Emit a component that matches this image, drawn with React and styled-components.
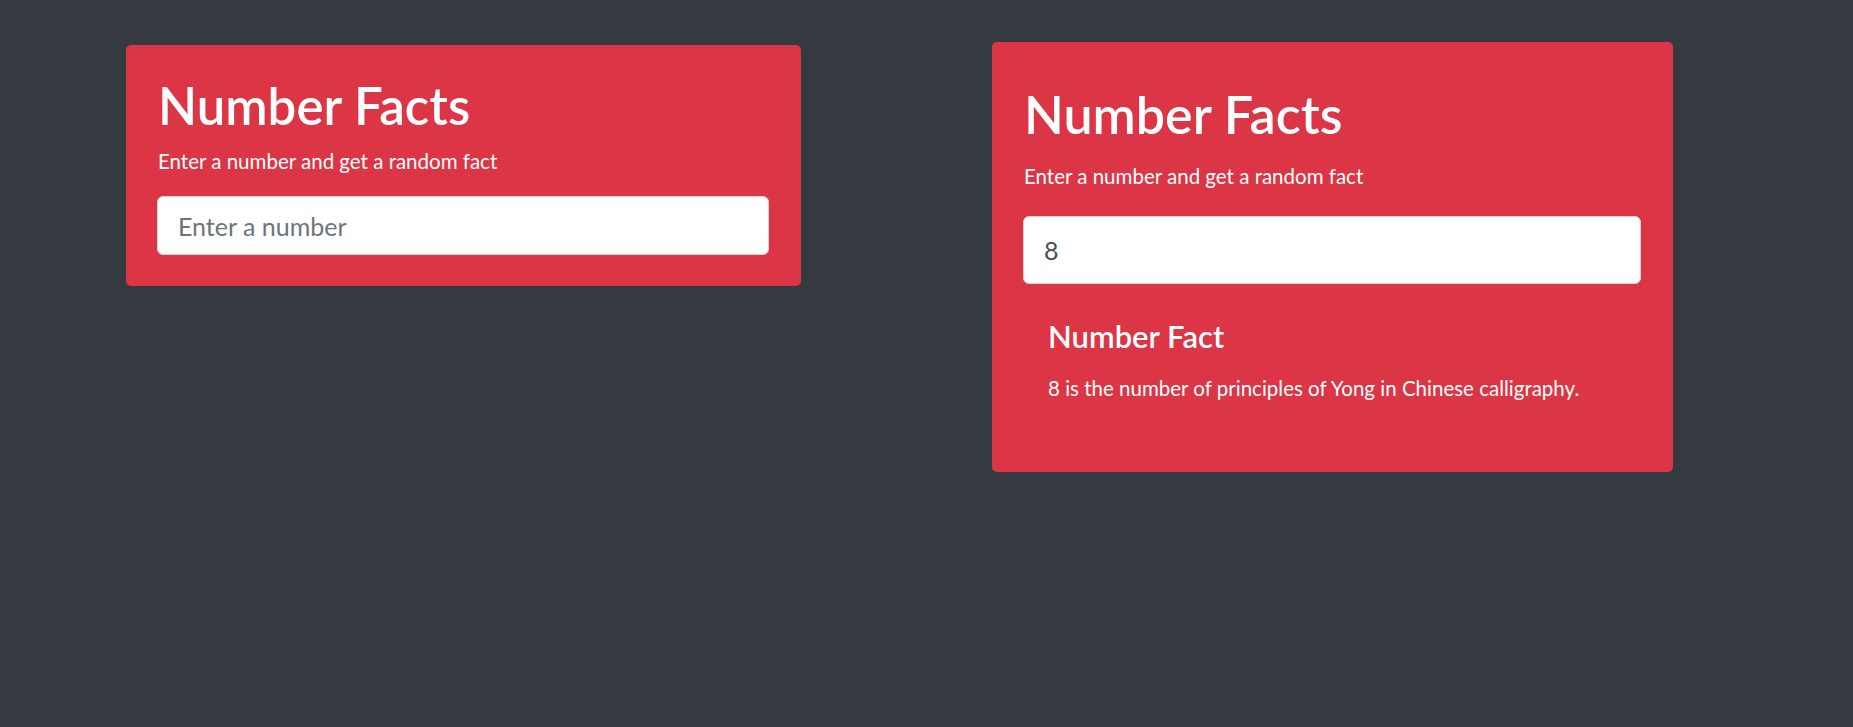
import React from "react";
import styled, { createGlobalStyle } from "styled-components";

const GlobalStyle = createGlobalStyle`
  html, body {
    margin: 0;
    padding: 0;
    background: #343a40;
    height: 100%;
  }
  body {
    font-family: Lato, "Noto Sans", "Liberation Sans", sans-serif;
    color: #fff;
  }
  * { box-sizing: border-box; }
`;

const Page = styled.main`
  display: grid;
  grid-template-columns: 675px 681px;
  column-gap: 191px;
  align-items: start;
  padding: 42px 0 0 126px;
  min-height: 727px;
`;

const Card = styled.section`
  background: #dc3545;
  border-radius: 5px;
  margin-top: ${(p) => (p.$tall ? "0" : "3px")};
  padding: ${(p) => (p.$tall ? "41px 32px 32px 31px" : "31px 32px 31px 31px")};
  display: flex;
  flex-direction: column;
`;

const Title = styled.h1`
  margin: 0 0 ${(p) => (p.$tall ? "16px" : "10px")};
  font-size: ${(p) => (p.$tall ? "52px" : "51px")};
  line-height: ${(p) => (p.$tall ? "62px" : "60px")};
  font-weight: 600;
  color: #fff;
  padding-left: 1px;
`;

const Lead = styled.p`
  margin: 0 0 ${(p) => (p.$tall ? "25px" : "20px")};
  font-size: 20.5px;
  line-height: 30px;
  color: #fff;
  padding-left: 1px;
`;

const NumberInput = styled.input`
  display: block;
  width: 100%;
  height: ${(p) => (p.$tall ? "68px" : "59px")};
  padding: 0 20px;
  font-family: Lato, "Noto Sans", "Liberation Sans", sans-serif;
  font-size: 25px;
  color: #495057;
  background: #fff;
  border: 1px solid #ced4da;
  border-radius: 6px;
  outline: none;
  &::placeholder {
    color: #6c757d;
  }
`;

const FactBlock = styled.div`
  padding: 34px 24px 37px 25px;
`;

const FactTitle = styled.h3`
  margin: 0 0 18px;
  font-size: 31px;
  line-height: 1.2;
  font-weight: 600;
  color: #fff;
`;

const FactText = styled.p`
  margin: 0;
  font-size: 20.5px;
  line-height: 30px;
  color: #fff;
`;

function NumberFacts({ tall, value, fact }) {
  return (
    <Card $tall={tall}>
      <Title $tall={tall}>Number Facts</Title>
      <Lead $tall={tall}>Enter a number and get a random fact</Lead>
      <NumberInput
        $tall={tall}
        type="text"
        placeholder="Enter a number"
        defaultValue={value}
      />
      {fact && (
        <FactBlock>
          <FactTitle>Number Fact</FactTitle>
          <FactText>{fact}</FactText>
        </FactBlock>
      )}
    </Card>
  );
}

export default function App() {
  return (
    <>
      <GlobalStyle />
      <Page>
        <NumberFacts />
        <NumberFacts
          tall
          value="8"
          fact="8 is the number of principles of Yong in Chinese calligraphy."
        />
      </Page>
    </>
  );
}
